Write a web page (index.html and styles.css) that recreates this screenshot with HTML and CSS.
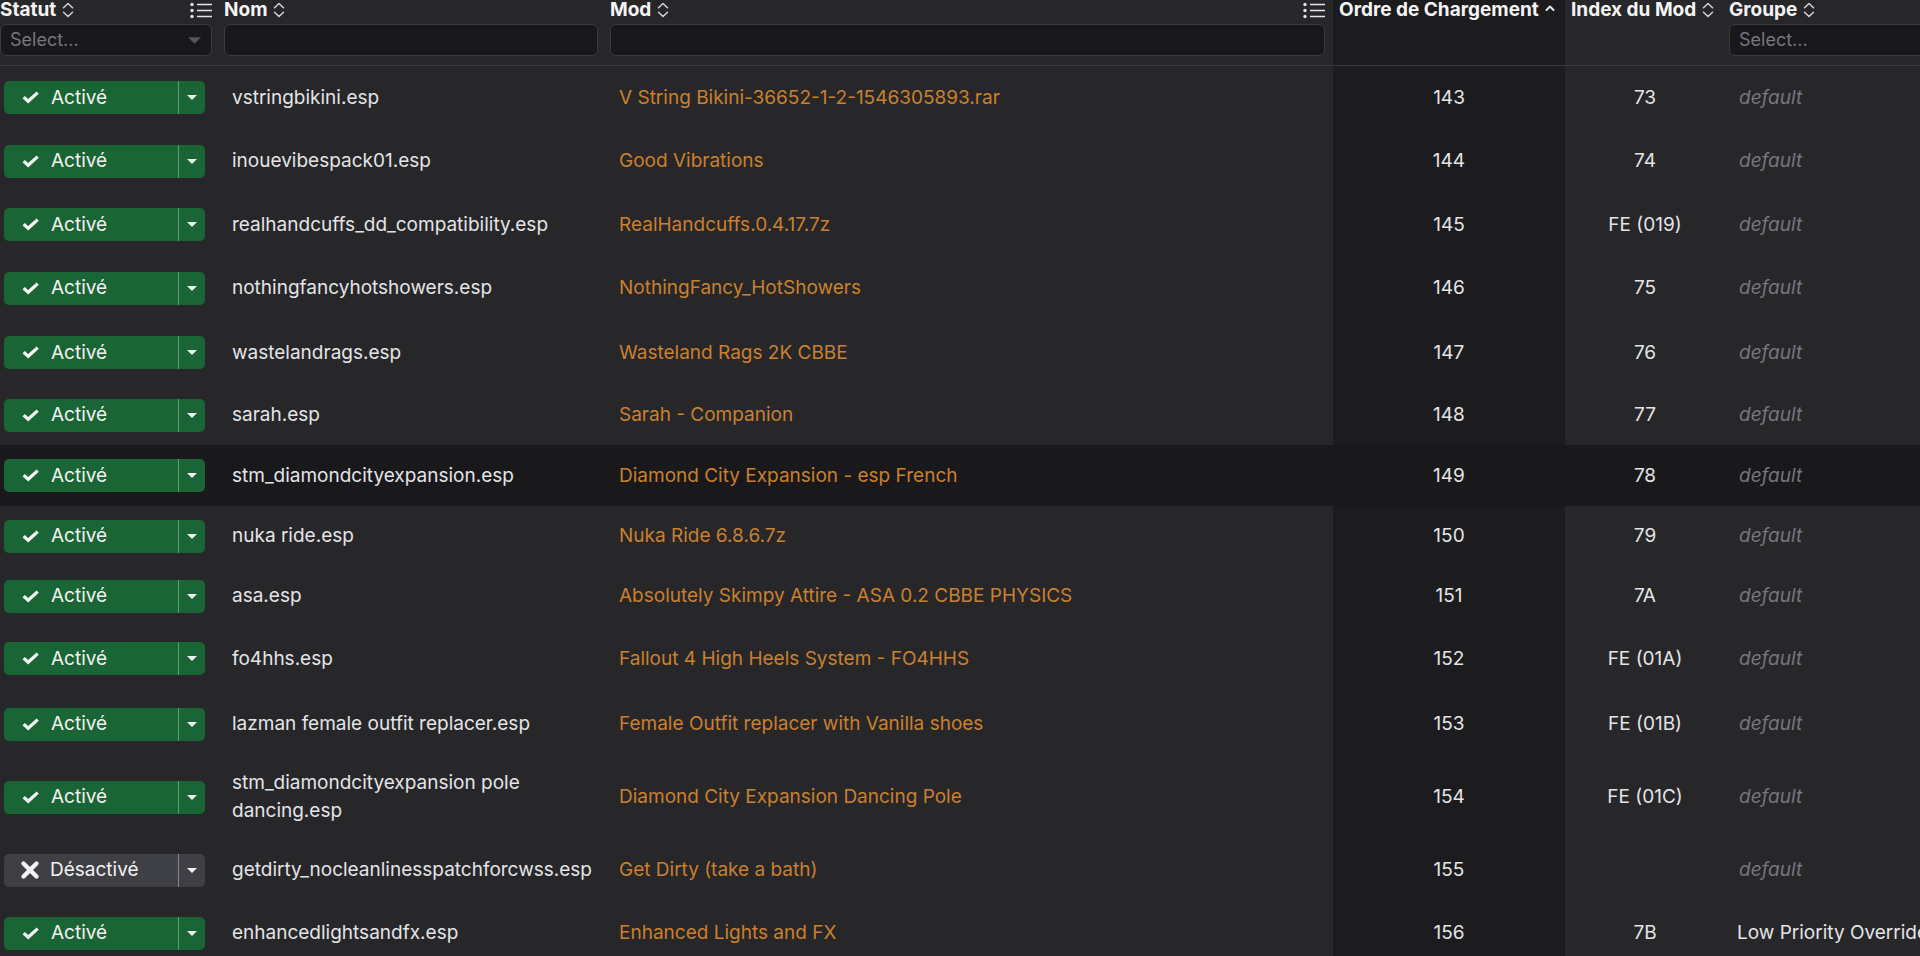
FILE: index.html
```html
<!DOCTYPE html>
<html lang="fr">

<head>
    <meta charset="UTF-8">
    <meta name="viewport" content="width=device-width, initial-scale=1.0">
    <title>Plugins</title>
    <link rel="stylesheet" href="styles.css">
</head>

<body>
    <svg width="0" height="0" class="defs">
        <defs>
            <symbol id="sort" viewBox="0 0 12 16">
                <path d="M1.5 5.8 L6 1.5 L10.5 5.8 M1.5 10.2 L6 14.5 L10.5 10.2" fill="none" stroke="currentColor" stroke-width="1.5" stroke-linecap="round" stroke-linejoin="round" />
            </symbol>
            <symbol id="asc" viewBox="0 0 10 6">
                <path d="M1.5 5 L5 1.5 L8.5 5" fill="none" stroke="currentColor" stroke-width="2" stroke-linecap="round" stroke-linejoin="round" />
            </symbol>
            <symbol id="menu" viewBox="0 0 22 17">
                <circle cx="2" cy="2.5" r="1.7" fill="currentColor" />
                <circle cx="2" cy="8.5" r="1.7" fill="currentColor" />
                <circle cx="2" cy="14.5" r="1.7" fill="currentColor" />
                <path d="M7 2.5 H22 M7 8.5 H22 M7 14.5 H22" stroke="currentColor" stroke-width="1.7" />
            </symbol>
            <symbol id="check" viewBox="0 0 17 13">
                <path d="M0.5 7.2 L2.9 4.9 L6.1 8 L14.6 0.5 L16.8 2.8 L6.2 12.6 Z" fill="currentColor" />
            </symbol>
            <symbol id="cross" viewBox="0 0 20 20">
                <path d="M3.5 3.5 L16.5 16.5 M16.5 3.5 L3.5 16.5" stroke="currentColor" stroke-width="4.4" stroke-linecap="round" />
            </symbol>
            <symbol id="caret" viewBox="0 0 10 5">
                <path d="M0 0 H10 L5 5 Z" fill="currentColor" />
            </symbol>
        </defs>
    </svg>

    <div class="table">
        <!-- Header -->
        <div class="head">
            <div class="hcell first">
                <div class="htitle">Statut <svg class="sort"><use href="#sort" /></svg>
                    <svg class="menu"><use href="#menu" /></svg>
                </div>
                <div class="filter">Select... <svg class="select-caret"><use href="#caret" /></svg></div>
            </div>
            <div class="hcell">
                <div class="htitle">Nom <svg class="sort"><use href="#sort" /></svg></div>
                <div class="filter"></div>
            </div>
            <div class="hcell">
                <div class="htitle">Mod <svg class="sort"><use href="#sort" /></svg>
                    <svg class="menu"><use href="#menu" /></svg>
                </div>
                <div class="filter"></div>
            </div>
            <div class="hcell plain sorted">
                <div class="htitle">Ordre de Chargement <svg class="asc"><use href="#asc" /></svg></div>
            </div>
            <div class="hcell plain">
                <div class="htitle">Index du Mod <svg class="sort"><use href="#sort" /></svg></div>
            </div>
            <div class="hcell">
                <div class="htitle">Groupe <svg class="sort"><use href="#sort" /></svg></div>
                <div class="filter">Select...</div>
            </div>
        </div>

        <!-- Rows -->
        <div class="row h63">
            <div class="cell first"><div class="status"><span class="main"><svg class="check"><use href="#check" /></svg>Activé</span><span class="drop"><svg class="caret"><use href="#caret" /></svg></span></div></div>
            <div class="cell">vstringbikini.esp</div>
            <div class="cell mod">V String Bikini-36652-1-2-1546305893.rar</div>
            <div class="cell num sorted">143</div>
            <div class="cell num">73</div>
            <div class="cell group">default</div>
        </div>
        <div class="row h64">
            <div class="cell first"><div class="status"><span class="main"><svg class="check"><use href="#check" /></svg>Activé</span><span class="drop"><svg class="caret"><use href="#caret" /></svg></span></div></div>
            <div class="cell">inouevibespack01.esp</div>
            <div class="cell mod">Good Vibrations</div>
            <div class="cell num sorted">144</div>
            <div class="cell num">74</div>
            <div class="cell group">default</div>
        </div>
        <div class="row h63">
            <div class="cell first"><div class="status"><span class="main"><svg class="check"><use href="#check" /></svg>Activé</span><span class="drop"><svg class="caret"><use href="#caret" /></svg></span></div></div>
            <div class="cell">realhandcuffs_dd_compatibility.esp</div>
            <div class="cell mod">RealHandcuffs.0.4.17.7z</div>
            <div class="cell num sorted">145</div>
            <div class="cell num">FE (019)</div>
            <div class="cell group">default</div>
        </div>
        <div class="row h64">
            <div class="cell first"><div class="status"><span class="main"><svg class="check"><use href="#check" /></svg>Activé</span><span class="drop"><svg class="caret"><use href="#caret" /></svg></span></div></div>
            <div class="cell">nothingfancyhotshowers.esp</div>
            <div class="cell mod">NothingFancy_HotShowers</div>
            <div class="cell num sorted">146</div>
            <div class="cell num">75</div>
            <div class="cell group">default</div>
        </div>
        <div class="row h65">
            <div class="cell first"><div class="status"><span class="main"><svg class="check"><use href="#check" /></svg>Activé</span><span class="drop"><svg class="caret"><use href="#caret" /></svg></span></div></div>
            <div class="cell">wastelandrags.esp</div>
            <div class="cell mod">Wasteland Rags 2K CBBE</div>
            <div class="cell num sorted">147</div>
            <div class="cell num">76</div>
            <div class="cell group">default</div>
        </div>
        <div class="row h60">
            <div class="cell first"><div class="status"><span class="main"><svg class="check"><use href="#check" /></svg>Activé</span><span class="drop"><svg class="caret"><use href="#caret" /></svg></span></div></div>
            <div class="cell">sarah.esp</div>
            <div class="cell mod">Sarah - Companion</div>
            <div class="cell num sorted">148</div>
            <div class="cell num">77</div>
            <div class="cell group">default</div>
        </div>
        <div class="row h61 hover">
            <div class="cell first"><div class="status"><span class="main"><svg class="check"><use href="#check" /></svg>Activé</span><span class="drop"><svg class="caret"><use href="#caret" /></svg></span></div></div>
            <div class="cell">stm_diamondcityexpansion.esp</div>
            <div class="cell mod">Diamond City Expansion - esp French</div>
            <div class="cell num sorted">149</div>
            <div class="cell num">78</div>
            <div class="cell group">default</div>
        </div>
        <div class="row h60">
            <div class="cell first"><div class="status"><span class="main"><svg class="check"><use href="#check" /></svg>Activé</span><span class="drop"><svg class="caret"><use href="#caret" /></svg></span></div></div>
            <div class="cell">nuka ride.esp</div>
            <div class="cell mod">Nuka Ride 6.8.6.7z</div>
            <div class="cell num sorted">150</div>
            <div class="cell num">79</div>
            <div class="cell group">default</div>
        </div>
        <div class="row h60">
            <div class="cell first"><div class="status"><span class="main"><svg class="check"><use href="#check" /></svg>Activé</span><span class="drop"><svg class="caret"><use href="#caret" /></svg></span></div></div>
            <div class="cell">asa.esp</div>
            <div class="cell mod">Absolutely Skimpy Attire - ASA 0.2 CBBE PHYSICS</div>
            <div class="cell num sorted">151</div>
            <div class="cell num">7A</div>
            <div class="cell group">default</div>
        </div>
        <div class="row h65">
            <div class="cell first"><div class="status"><span class="main"><svg class="check"><use href="#check" /></svg>Activé</span><span class="drop"><svg class="caret"><use href="#caret" /></svg></span></div></div>
            <div class="cell">fo4hhs.esp</div>
            <div class="cell mod">Fallout 4 High Heels System - FO4HHS</div>
            <div class="cell num sorted">152</div>
            <div class="cell num">FE (01A)</div>
            <div class="cell group">default</div>
        </div>
        <div class="row h66">
            <div class="cell first"><div class="status"><span class="main"><svg class="check"><use href="#check" /></svg>Activé</span><span class="drop"><svg class="caret"><use href="#caret" /></svg></span></div></div>
            <div class="cell">lazman female outfit replacer.esp</div>
            <div class="cell mod">Female Outfit replacer with Vanilla shoes</div>
            <div class="cell num sorted">153</div>
            <div class="cell num">FE (01B)</div>
            <div class="cell group">default</div>
        </div>
        <div class="row h80">
            <div class="cell first"><div class="status"><span class="main"><svg class="check"><use href="#check" /></svg>Activé</span><span class="drop"><svg class="caret"><use href="#caret" /></svg></span></div></div>
            <div class="cell">stm_diamondcityexpansion pole dancing.esp</div>
            <div class="cell mod">Diamond City Expansion Dancing Pole</div>
            <div class="cell num sorted">154</div>
            <div class="cell num">FE (01C)</div>
            <div class="cell group">default</div>
        </div>
        <div class="row h66">
            <div class="cell first"><div class="status off"><span class="main"><svg class="cross"><use href="#cross" /></svg>Désactivé</span><span class="drop"><svg class="caret"><use href="#caret" /></svg></span></div></div>
            <div class="cell">getdirty_nocleanlinesspatchforcwss.esp</div>
            <div class="cell mod">Get Dirty (take a bath)</div>
            <div class="cell num sorted">155</div>
            <div class="cell num"></div>
            <div class="cell group">default</div>
        </div>
        <div class="row h60">
            <div class="cell first"><div class="status"><span class="main"><svg class="check"><use href="#check" /></svg>Activé</span><span class="drop"><svg class="caret"><use href="#caret" /></svg></span></div></div>
            <div class="cell">enhancedlightsandfx.esp</div>
            <div class="cell mod">Enhanced Lights and FX</div>
            <div class="cell num sorted">156</div>
            <div class="cell num">7B</div>
            <div class="cell">Low Priority Override</div>
        </div>
    </div>
</body>

</html>
```

FILE: styles.css
```css
/* General Styles */
* {
    box-sizing: border-box;
}

body {
    margin: 0;
    height: 956px;
    overflow: hidden;
    background-color: #27272a;
    color: #e4e4e7;
    font-family: Inter, "Noto Sans", sans-serif;
    font-size: 19px;
    line-height: 28px;
}

.defs {
    position: absolute;
}

.table {
    width: max-content;
}

.head,
.row {
    display: grid;
    grid-template-columns: 220px 386px 727px 232px 160px 340px;
}

/* Header */
.head {
    height: 66px;
    border-bottom: 1px solid #38383d;
}

.hcell {
    display: flex;
    flex-direction: column;
    gap: 4px;
    padding: 0 8px 0 4px;
}

.hcell.first {
    padding-left: 0;
}

.hcell.plain {
    padding-left: 6px;
}

.htitle {
    display: flex;
    align-items: center;
    gap: 6px;
    height: 20px;
    line-height: 20px;
    font-weight: 700;
    color: #f4f4f5;
    white-space: nowrap;
}

.htitle .menu {
    margin-left: auto;
    width: 22px;
    height: 17px;
    color: #e4e4e7;
}

.sort {
    width: 12px;
    height: 16px;
    color: #d4d4d8;
}

.asc {
    width: 10px;
    height: 6px;
    margin-bottom: 4px;
    color: #e4e4e7;
}

.filter {
    display: flex;
    align-items: center;
    height: 32px;
    padding: 0 10px 0 9px;
    background: #18181b;
    border: 1px solid #3a3a3f;
    border-radius: 6px;
    color: #76767c;
    font-size: 18px;
}

.select-caret {
    margin-left: auto;
    width: 13px;
    height: 7px;
    color: #55555b;
}

/* Rows */
.h60 { height: 60px; }
.h61 { height: 61px; }
.h63 { height: 63px; }
.h64 { height: 64px; }
.h65 { height: 65px; }
.h66 { height: 66px; }
.h80 { height: 80px; }

.cell {
    display: flex;
    align-items: center;
    min-width: 0;
    padding: 0 8px 0 12px;
}

.cell.first {
    padding-left: 4px;
}

.sorted {
    background: #1c1c1f;
}

.row.hover {
    background: #19191b;
}

.row.hover .sorted {
    background: transparent;
}

.num {
    justify-content: center;
    padding: 0;
}

.mod {
    color: #c9802f;
    padding-left: 13px;
}

.group {
    color: #76767c;
    font-style: italic;
    padding-left: 14px;
}

/* Status button */
.status {
    display: flex;
    width: 201px;
    height: 33px;
    border-radius: 5px;
    background: #1a6535;
    color: #f2f2f2;
}

.status .main {
    flex: 1;
    display: flex;
    align-items: center;
    gap: 12px;
    padding-left: 18px;
    border-right: 1px solid #5e9c70;
}

.status .drop {
    width: 26px;
    display: flex;
    align-items: center;
    justify-content: center;
}

.status.off {
    background: #3f3f46;
}

.status.off .main {
    gap: 10px;
    padding-left: 16px;
    border-right-color: #85858b;
}

.check {
    width: 17px;
    height: 13px;
}

.cross {
    width: 20px;
    height: 20px;
}

.caret {
    width: 10px;
    height: 5px;
}
```
